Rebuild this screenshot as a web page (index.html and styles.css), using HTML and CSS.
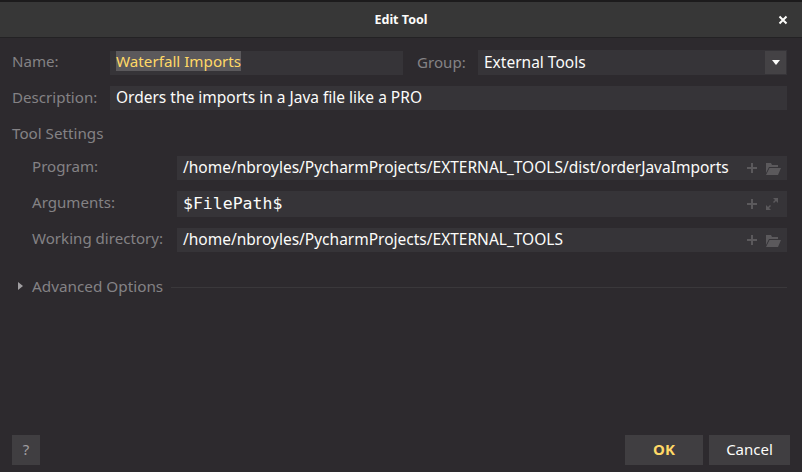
FILE: index.html
```html
<!DOCTYPE html>
<html lang="en">
<head>
  <meta charset="UTF-8">
  <title>Edit Tool</title>
  <link rel="stylesheet" href="styles.css">
</head>
<body>
  <div class="dialog">
    <div class="titlebar">
      <span class="title">Edit Tool</span>
      <svg class="close" width="10" height="10" viewBox="0 0 10 10"><path d="M1.5 1.5l7 7M8.5 1.5l-7 7" stroke="#fcfcfa" stroke-width="2"/></svg>
    </div>

    <div class="content">
      <div class="row row-name">
        <label class="label label-top">Name:</label>
        <div class="field field-name"><span class="selected">Waterfall Imports</span></div>
        <label class="label label-group">Group:</label>
        <div class="field field-group">
          <span class="grow">External Tools</span>
          <span class="arrow-btn"><span class="arrow"></span></span>
        </div>
      </div>
      <div class="row row-desc">
        <label class="label label-top">Description:</label>
        <div class="field grow"><span>Orders the imports in a Java file like a PRO</span></div>
      </div>

      <div class="section-title">Tool Settings</div>

      <div class="settings">
        <label class="label">Program:</label>
        <div class="field path-field">
          <span class="grow">/home/nbroyles/PycharmProjects/EXTERNAL_TOOLS/dist/orderJavaImports</span>
          <svg class="icon" width="12" height="12" viewBox="0 0 12 12"><path d="M6 1v10M1 6h10" stroke="#5b595c" stroke-width="2"/></svg>
          <svg class="icon" width="16" height="13" viewBox="0 0 16 13"><path d="M1 1h5l1 2h6v2H4L1 11zM4.5 6H16l-3 7H1z" fill="#5b595c"/></svg>
        </div>
        <label class="label">Arguments:</label>
        <div class="field path-field args-field">
          <span class="grow mono">$FilePath$</span>
          <svg class="icon" width="12" height="12" viewBox="0 0 12 12"><path d="M6 1v10M1 6h10" stroke="#5b595c" stroke-width="2"/></svg>
          <svg class="icon icon-expand" width="14" height="14" viewBox="0 0 14 14"><path d="M8 1h5v5l-2-2-2 2-1-1 2-2zM6 13H1V8l2 2 2-2 1 1-2 2z" fill="#5b595c"/></svg>
        </div>
        <label class="label">Working directory:</label>
        <div class="field path-field">
          <span class="grow">/home/nbroyles/PycharmProjects/EXTERNAL_TOOLS</span>
          <svg class="icon" width="12" height="12" viewBox="0 0 12 12"><path d="M6 1v10M1 6h10" stroke="#5b595c" stroke-width="2"/></svg>
          <svg class="icon" width="16" height="13" viewBox="0 0 16 13"><path d="M1 1h5l1 2h6v2H4L1 11zM4.5 6H16l-3 7H1z" fill="#5b595c"/></svg>
        </div>
      </div>

      <div class="advanced">
        <span class="triangle"></span>
        <span class="label">Advanced Options</span>
        <span class="rule"></span>
      </div>
    </div>

    <div class="footer">
      <button class="btn btn-help">?</button>
      <span class="grow"></span>
      <button class="btn btn-ok">OK</button>
      <button class="btn btn-cancel">Cancel</button>
    </div>
  </div>
</body>
</html>
```

FILE: styles.css
```css
* {
  box-sizing: border-box;
}

html, body {
  margin: 0;
  height: 100%;
}

body {
  background-color: #2d2a2e;
  color: #fcfcfa;
  font-family: "Noto Sans", "Liberation Sans", sans-serif;
  font-size: 15.5px;
  line-height: 20px;
  overflow: hidden;
}

.dialog {
  height: 472px;
  display: flex;
  flex-direction: column;
  border-top: 2px solid #1c1b1c;
}

.titlebar {
  height: 36px;
  flex: none;
  display: flex;
  align-items: center;
  justify-content: center;
  position: relative;
  background-color: #373737;
  border-bottom: 1px solid #232224;
}

.title {
  font-weight: 700;
  font-size: 12.5px;
}

.close {
  position: absolute;
  right: 14px;
  top: 13px;
}

.content {
  flex: 1;
  padding: 12px 15px 0 12px;
}

.row {
  display: flex;
  align-items: center;
}

.row-desc {
  margin-top: 11px;
}

.label {
  color: #848285;
  font-size: 15.1px;
  white-space: nowrap;
}

.label-top {
  width: 98px;
  flex: none;
  padding-bottom: 3px;
}

.label-group {
  margin: 0 0 0 14px;
  padding-bottom: 2px;
}

.field {
  height: 24px;
  padding: 0 6px 3px;
  display: flex;
  align-items: center;
  background-color: #363438;
  white-space: nowrap;
}

.field-name {
  width: 293px;
  flex: none;
}

.selected {
  color: #ffd866;
  background-color: #5b595c;
  font-size: 15.2px;
}

.field-group {
  width: 309px;
  flex: none;
  margin-left: auto;
  height: 25px;
  padding: 0 1px 0 6px;
}

.field-group .grow {
  padding-bottom: 2px;
}

.grow {
  flex: 1;
}

.arrow-btn {
  width: 21px;
  height: 23px;
  display: flex;
  align-items: center;
  justify-content: center;
  background-color: #444245;
}

.arrow {
  border-left: 4.5px solid transparent;
  border-right: 4.5px solid transparent;
  border-top: 5px solid #fcfcfa;
}

.section-title {
  color: #848285;
  font-size: 15.2px;
  margin-top: 13px;
}

.settings {
  display: grid;
  grid-template-columns: 145px 1fr;
  row-gap: 11px;
  align-items: center;
  margin: 13px 0 0 20px;
}

.settings .label {
  padding-bottom: 4px;
}

.path-field {
  padding-right: 6px;
}

.args-field {
  height: 26px;
  padding-bottom: 0;
}

.mono {
  font-family: "DejaVu Sans Mono", monospace;
  font-size: 16.5px;
}

.icon {
  flex: none;
  margin: 3px 0 0 7px;
}

.args-field .icon {
  margin-top: 0;
}

.args-field .icon-expand {
  margin-right: 2px;
}

.advanced {
  display: flex;
  align-items: center;
  margin-top: 24px;
}

.advanced .label {
  font-size: 15.3px;
}

.triangle {
  border-top: 4px solid transparent;
  border-bottom: 4px solid transparent;
  border-left: 5px solid #a09ea1;
  margin: 0 9px 0 6px;
}

.rule {
  flex: 1;
  height: 1px;
  background-color: #3a383b;
  margin: 3px 0 0 8px;
}

.footer {
  flex: none;
  display: flex;
  gap: 6px;
  padding: 0 12px 7px 12px;
}

.btn {
  height: 30px;
  border: none;
  padding: 0 0 2px;
  background-color: #403e41;
  color: #fcfcfa;
  font-family: inherit;
  font-size: 15px;
}

.btn-help {
  width: 28px;
  color: #a09ea1;
}

.btn-ok {
  width: 78px;
  color: #ffd866;
  font-weight: 700;
}

.btn-cancel {
  width: 81px;
}
```
